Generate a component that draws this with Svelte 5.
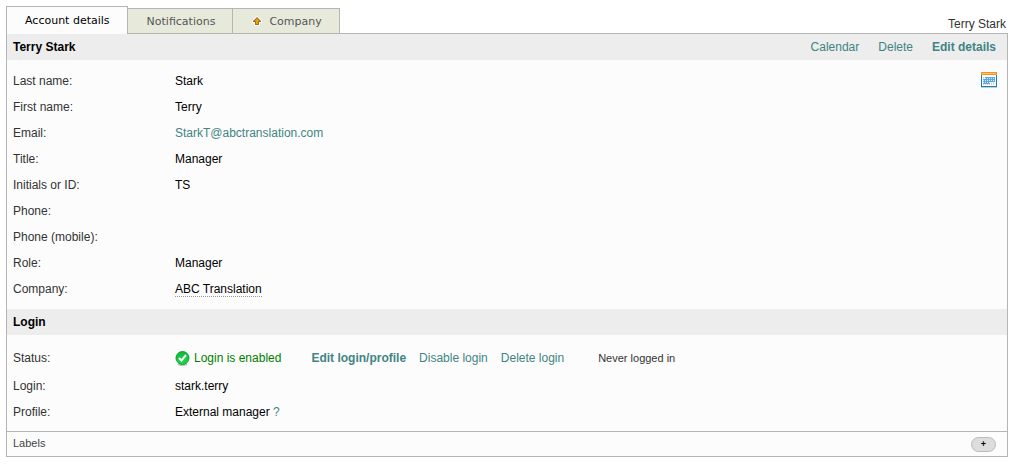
<script>
    let activeTab = $state("Account details");

    const tabs = ["Account details", "Notifications", "Company"];

    const details = [
        { label: "Last name:", value: "Stark" },
        { label: "First name:", value: "Terry" },
        { label: "Email:", value: "StarkT@abctranslation.com", type: "email" },
        { label: "Title:", value: "Manager" },
        { label: "Initials or ID:", value: "TS" },
        { label: "Phone:", value: "" },
        { label: "Phone (mobile):", value: "" },
        { label: "Role:", value: "Manager" },
        { label: "Company:", value: "ABC Translation", type: "company" }
    ];
</script>

<div class="page">
    <div class="top">
        <nav class="tabs">
            {#each tabs as tab}
                <button class="tab" class:active={activeTab === tab} onclick={() => (activeTab = tab)}>
                    {#if tab === "Company"}
                        <svg class="arrow" width="10" height="10" viewBox="0 0 10 10">
                            <path d="M5 1 L9 5 V6 H7 V9 H3 V6 H1 V5 Z" fill="none" stroke="#fff" stroke-width="2" />
                            <path d="M5 1 L9 5 V6 H7 V9 H3 V6 H1 V5 Z" fill="#b5651d" />
                            <path d="M5 2.5 L7.5 5 H6 V8 H4 V5 H2.5 Z" fill="#c9b400" />
                        </svg>
                    {/if}
                    {tab}
                </button>
            {/each}
        </nav>
        <span class="user">Terry Stark</span>
    </div>

    <main class="panel">
        <header class="bar">
            <h2>Terry Stark</h2>
            <div class="actions">
                <a href="#calendar">Calendar</a>
                <a href="#delete">Delete</a>
                <a href="#edit" class="strong">Edit details</a>
            </div>
        </header>

        <section class="details">
            <dl>
                {#each details as item}
                    <div class="row">
                        <dt>{item.label}</dt>
                        <dd>
                            {#if item.type === "email"}
                                <a href="mailto:{item.value}">{item.value}</a>
                            {:else if item.type === "company"}
                                <a href="#company" class="company">{item.value}</a>
                            {:else}
                                {item.value}
                            {/if}
                        </dd>
                    </div>
                {/each}
            </dl>
            <a href="#calendar" class="calendar" aria-label="Calendar">
                <svg width="16" height="16" viewBox="0 0 16 16">
                    <rect y="15" width="16" height="1" fill="#c9cdd0" />
                    <rect y="3" width="16" height="12" fill="#1680bd" />
                    <rect width="16" height="3" fill="#f7941d" />
                    <rect x="1" y="1" width="14" height="1" fill="#fcc274" />
                    <rect x="1" y="3" width="14" height="11" fill="#fff" />
                    <path d="M4 5H14V10H9V12H2V7H4Z" fill="#5ba6e0" />
                    <path d="M2 5.5H4M10 11.5H14M2 12.5H14" stroke="#cfcfcf" stroke-dasharray="1 1" />
                    <path d="M2 6.5H14M2 8.5H14M2 10.5H14" stroke="#d6ebfa" stroke-dasharray="1 1" />
                </svg>
            </a>
        </section>

        <header class="bar">
            <h2>Login</h2>
        </header>

        <dl class="login">
            <div class="row status">
                <dt>Status:</dt>
                <dd>
                    <svg width="15" height="15" viewBox="0 0 15 15">
                        <defs>
                            <linearGradient id="green" x2="0" y2="1">
                                <stop offset="0" stop-color="#10b63c" />
                                <stop offset="1" stop-color="#1cdc4a" />
                            </linearGradient>
                        </defs>
                        <ellipse cx="7.5" cy="13.5" rx="5" ry="1.5" fill="#c4cfc4" />
                        <circle cx="7.5" cy="7" r="6.5" fill="url(#green)" stroke="#0b9e30" />
                        <path d="M4 7 L6.5 9.5 L11 4" fill="none" stroke="#fff" stroke-width="2" />
                    </svg>
                    <span class="enabled">Login is enabled</span>
                    <span class="links">
                        <a href="#edit-login" class="strong">Edit login/profile</a>
                        <a href="#disable-login">Disable login</a>
                        <a href="#delete-login">Delete login</a>
                    </span>
                    <small>Never logged in</small>
                </dd>
            </div>
            <div class="row">
                <dt>Login:</dt>
                <dd>stark.terry</dd>
            </div>
            <div class="row">
                <dt>Profile:</dt>
                <dd>External manager&nbsp;<a href="#help">?</a></dd>
            </div>
        </dl>

        <footer class="labels">
            <span>Labels</span>
            <button class="add" aria-label="Add label">+</button>
        </footer>
    </main>
</div>

<style>
:global(body) {
    margin: 0;
    background: #fff;
}

.page {
    padding: 6px 7px 8px 6px;
    font-family: "Liberation Sans", Arial, sans-serif;
    font-size: 12px;
    line-height: 14px;
    color: #000;
}

a {
    color: #418483;
    text-decoration: none;
}

a:hover {
    text-decoration: underline;
}

.strong {
    font-weight: bold;
}

/* tabs */
.top {
    display: flex;
    justify-content: space-between;
    align-items: flex-end;
}

.tabs {
    display: flex;
    align-items: flex-end;
}

.tab {
    display: flex;
    align-items: center;
    height: 25px;
    padding: 0 17px 0 19px;
    border: 1px solid #b5b5b5;
    border-left: 0;
    border-bottom: 0;
    background: #e7eadb;
    color: #555;
    font-family: Verdana, "DejaVu Sans", sans-serif;
    font-size: 11px;
    cursor: pointer;
}

.tab:first-child {
    padding-left: 18px;
    border-left: 1px solid #b5b5b5;
}

.tab.active {
    position: relative;
    height: 28px;
    margin-bottom: -1px;
    background: #fcfcfc;
    color: #000;
}

.arrow {
    margin-right: 7px;
    overflow: visible;
}

.user {
    padding: 0 2px 2px 0;
    color: #333;
}

/* panel */
.panel {
    border: 1px solid #b5b5b5;
    background: #fcfcfc;
}

.bar {
    display: flex;
    justify-content: space-between;
    align-items: center;
    height: 26px;
    padding: 0 11px 0 6px;
    background: #ededed;
}

h2 {
    margin: 0;
    font-size: 12px;
}

.actions {
    display: flex;
    gap: 19px;
}

.details {
    display: flex;
    justify-content: space-between;
    padding: 8px 10px 7px 6px;
}

.calendar {
    padding-top: 4px;
}

dl,
dd {
    margin: 0;
}

.row {
    display: flex;
    align-items: center;
    height: 26px;
}

dt {
    width: 162px;
    color: #333;
}

dd {
    display: flex;
    align-items: center;
}

.company {
    border-bottom: 1px dotted #999;
    color: #000;
}

.login {
    padding: 8px 6px 6px;
}

.status {
    height: 30px;
}

.enabled {
    margin: 0 30px 0 4px;
    color: #008000;
}

.links {
    display: flex;
    gap: 13px;
}

small {
    margin-left: 34px;
    font-size: 11px;
    color: #333;
}

.labels {
    display: flex;
    justify-content: space-between;
    align-items: center;
    height: 24px;
    padding: 0 11px 0 6px;
    border-top: 1px solid #b5b5b5;
    font-size: 11px;
    color: #444;
}

.labels span {
    padding-bottom: 2px;
}

.add {
    width: 25px;
    height: 15px;
    padding: 0;
    border: 1px solid #bbb;
    border-radius: 8px;
    background: #ddd;
    color: #000;
    font-family: inherit;
    font-size: 9px;
    font-weight: bold;
    line-height: 12px;
    cursor: pointer;
}
</style>
